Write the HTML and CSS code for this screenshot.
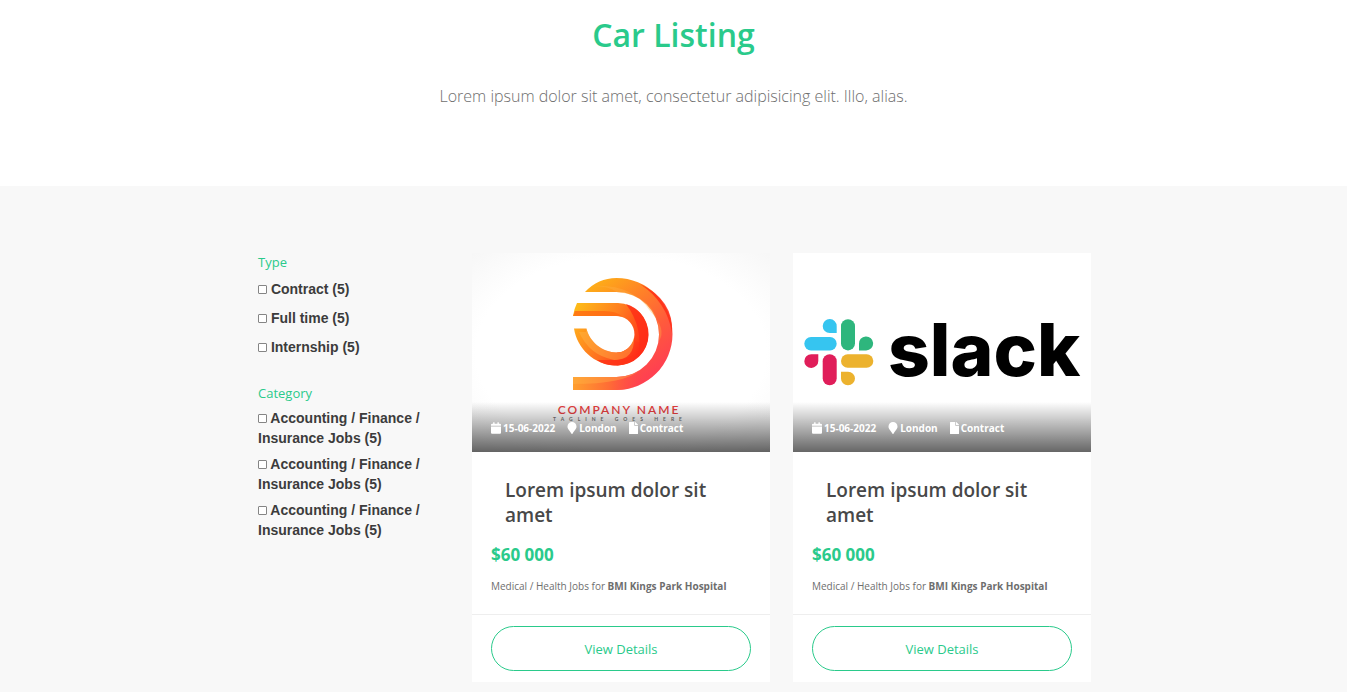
FILE: index.html
```html
<!DOCTYPE html>
<html lang="en">
<head>
<meta charset="utf-8">
<meta name="viewport" content="width=device-width, initial-scale=1">
<title>Car Listing</title>
<link rel="stylesheet" href="styles.css">
</head>
<body>
<svg class="sprite" aria-hidden="true">
  <symbol id="calendar" viewBox="0 0 14 16"><path d="M0 6h14v8.500a1.500 1.500 0 0 1-1.500 1.500h-11A1.500 1.500 0 0 1 0 14.500zM1.500 2H3V.4Q3 0 3.400 0h1.200Q5 0 5 .4V2h4V.4Q9 0 9.400 0h1.200q.4 0 .4.4V2h1.500A1.500 1.500 0 0 1 14 3.500V5H0V3.500A1.500 1.500 0 0 1 1.500 2z"/></symbol>
  <symbol id="marker" viewBox="0 0 12 16"><path d="M5.400 15.700C.8 9.100 0 8.400 0 6a6 6 0 0 1 12 0c0 2.400-.8 3.100-5.400 9.700a.7.7 0 0 1-1.200 0z"/></symbol>
  <symbol id="file" viewBox="0 0 12 16"><path d="M7 4.200V0H.8Q0 0 0 .8v14.400q0 .8.8.8h10.400q.8 0 .8-.8V5H7.800Q7 5 7 4.200zM12 3.800V4H8V0h.2q.3 0 .5.200l3.100 3.100q.2.200.2.500z"/></symbol>
</svg>

<header class="intro">
  <h1 class="intro-title">Car Listing</h1>
  <p class="intro-text">Lorem ipsum dolor sit amet, consectetur adipisicing elit. Illo, alias.</p>
</header>

<main class="listing">
  <div class="container">
    <form class="filters">
      <fieldset class="group types">
        <legend class="group-title">Type</legend>
        <label class="option"><input class="check" type="checkbox"> Contract (5)</label>
        <label class="option"><input class="check" type="checkbox"> Full time (5)</label>
        <label class="option"><input class="check" type="checkbox"> Internship (5)</label>
      </fieldset>
      <fieldset class="group categories">
        <legend class="group-title">Category</legend>
        <label class="option"><input class="check" type="checkbox"> Accounting / Finance / Insurance Jobs (5)</label>
        <label class="option"><input class="check" type="checkbox"> Accounting / Finance / Insurance Jobs (5)</label>
        <label class="option"><input class="check" type="checkbox"> Accounting / Finance / Insurance Jobs (5)</label>
      </fieldset>
    </form>

    <article class="card">
      <div class="media">
        <svg class="picture" viewBox="0 0 298 199" role="img" aria-label="Company logo">
          <defs>
            <radialGradient id="paper" r=".75"><stop offset=".65" stop-color="#fff"/><stop offset="1" stop-color="#f5f5f5"/></radialGradient>
            <linearGradient id="outer" gradientUnits="userSpaceOnUse" x1="112" y1="30" x2="180" y2="120"><stop stop-color="#fdb515"/><stop offset=".35" stop-color="#ff8426"/><stop offset=".7" stop-color="#ff5a3c"/><stop offset="1" stop-color="#ff4150"/></linearGradient>
            <linearGradient id="foot" gradientUnits="userSpaceOnUse" x1="101" y1="0" x2="172" y2="0"><stop stop-color="#ff9f2e"/><stop offset=".5" stop-color="#ff6d35"/><stop offset="1" stop-color="#ff4845" stop-opacity="0"/></linearGradient>
            <linearGradient id="inner" gradientUnits="userSpaceOnUse" x1="103" y1="55" x2="172" y2="92"><stop stop-color="#fdbb18"/><stop offset=".5" stop-color="#ff7f20"/><stop offset="1" stop-color="#ff3018"/></linearGradient>
            <linearGradient id="hook" gradientUnits="userSpaceOnUse" x1="102" y1="76" x2="160" y2="110"><stop stop-color="#ffa91c"/><stop offset=".55" stop-color="#ff6d20"/><stop offset="1" stop-color="#ff2d18"/></linearGradient>
          </defs>
          <rect width="298" height="199" fill="url(#paper)"/>
          <path fill="url(#outer)" d="M113 39Q126 25 144.500 25A56 56 0 0 1 144.500 137H101V124H144.500A42.500 42.500 0 0 0 144.500 39Z"/>
          <path fill="url(#foot)" d="M101 124H144.500Q158 124 168 117L174 129Q160 137 144.500 137H101Z"/>
          <path fill="#ff2d18" opacity=".85" d="M168 31Q202 47 200 80Q195 49 168 31Z"/>
          <path fill="#ffb347" opacity=".35" d="M144.500 39Q138 33 119 33Q160 30 178 58Q195 76 187 88Q190 44 144.500 39Z"/>
          <path fill="#ffb347" opacity=".4" d="M101 124H144.500Q158 124 168 117Q153 131 101 131Z"/>
          <path fill="url(#inner)" d="M105 50H146A31.200 31.200 0 0 1 144.700 112.500V99.500A18.300 18.300 0 0 0 146 63H101Q102 56 105 50Z"/>
          <path fill="url(#hook)" d="M102 75.500H114.500C117 88 130 99.500 145 99.500Q157 99 162 87L173 92Q165 112 144.700 112.500C122 112.500 105 95 102 75.500Z"/>
          <path fill="#ff6512" opacity=".75" d="M103 58H132Q145 58 151 64Q147 63 144 63H101Z"/>
          <path fill="#ff2d18" opacity=".8" d="M154 51C180 59 182 92 166 104Q172 75 154 51Z"/>
          <path fill="#ffb347" opacity=".45" d="M114.500 75.500C117 88 130 99.500 145 99.500Q158 99 162 84Q163 107 142 107Q117 102 107 79H114Z"/>
          <path fill="#ff3218" opacity=".85" d="M125 107H145Q158 106 166 98Q158 113 142 112.500Q132 112 125 107Z"/>
          <text class="brand" x="147" y="161">COMPANY NAME</text>
          <text class="tagline" x="148" y="168">TAGLINE GOES HERE</text>
        </svg>
        <ul class="facts">
          <li class="fact"><svg class="icon"><use href="#calendar"/></svg>15-06-2022</li>
          <li class="fact"><svg class="icon"><use href="#marker"/></svg>London</li>
          <li class="fact"><svg class="icon narrow"><use href="#file"/></svg>Contract</li>
        </ul>
      </div>
      <div class="content">
        <h2 class="card-title">Lorem ipsum dolor sit amet</h2>
        <p class="price">$60 000</p>
        <p class="summary">Medical / Health Jobs for <strong>BMI Kings Park Hospital</strong></p>
      </div>
      <footer class="actions"><a class="details" href="#">View Details</a></footer>
    </article>

    <article class="card">
      <div class="media">
        <svg class="picture" viewBox="0 0 298 199" role="img" aria-label="Slack logo">
          <rect width="298" height="199" fill="#fff"/>
          <g fill="#36c5f0"><path d="M43.700 80V73.200A7 7 0 1 0 36.700 80Z"/><rect x="11.300" y="84" width="32.400" height="13.400" rx="6.700"/></g>
          <g fill="#2eb67d"><rect x="48" y="66.200" width="14" height="31.200" rx="7"/><path d="M66 97.400V91A7.100 7 0 1 1 73.200 97.400Z"/></g>
          <g fill="#e01e5a"><path d="M25.300 101.300V108A7 6.800 0 1 1 18.300 101.300Z"/><rect x="29.700" y="101.300" width="14" height="30.900" rx="7"/></g>
          <g fill="#ecb22e"><rect x="48" y="101.300" width="32.300" height="13.400" rx="6.700"/><path d="M48 118.700H55A7 6.800 0 1 1 48 125.400Z"/></g>
          <text class="wordmark" x="95" y="123">slack</text>
        </svg>
        <ul class="facts">
          <li class="fact"><svg class="icon"><use href="#calendar"/></svg>15-06-2022</li>
          <li class="fact"><svg class="icon"><use href="#marker"/></svg>London</li>
          <li class="fact"><svg class="icon narrow"><use href="#file"/></svg>Contract</li>
        </ul>
      </div>
      <div class="content">
        <h2 class="card-title">Lorem ipsum dolor sit amet</h2>
        <p class="price">$60 000</p>
        <p class="summary">Medical / Health Jobs for <strong>BMI Kings Park Hospital</strong></p>
      </div>
      <footer class="actions"><a class="details" href="#">View Details</a></footer>
    </article>
  </div>
</main>
</body>
</html>
```

FILE: styles.css
```css
* { box-sizing: border-box; }

body {
  margin: 0;
  background: #fff;
  color: #6e6e6e;
  font-family: "Open Sans", "Noto Sans", sans-serif;
  font-size: 14px;
}

h1, h2, p, ul, fieldset { margin: 0; padding: 0; }
fieldset { border: 0; min-width: 0; }
legend { padding: 0; }

.sprite { display: none; }

.intro {
  padding: 11px 24px 76px;
  text-align: center;
}

.intro-title {
  color: #2aca8b;
  font-size: 32px;
  font-weight: 600;
  line-height: 48px;
}

.intro-text {
  margin-top: 23px;
  font-size: 16px;
  font-weight: 300;
  line-height: 28px;
}

.listing {
  min-height: calc(100vh - 186px);
  padding: 67px 24px 10px;
  background: #f8f8f8;
}

.container {
  display: grid;
  grid-template-columns: 193px 1fr 1fr;
  align-items: start;
  gap: 23px;
  max-width: 835px;
  margin: 0 auto;
}

.filters { padding: 0 24px 0 2px; }

.group-title {
  color: #2aca8b;
  font-size: 13px;
  line-height: 18px;
}

.option {
  display: block;
  color: #3c3c3c;
  font-family: "Liberation Sans", Arial, sans-serif;
  font-size: 14px;
  font-weight: 700;
  line-height: 20px;
}

.types .option { margin-top: 8px; }
.types .option + .option { margin-top: 9px; }
.categories { margin-top: 27px; }
.categories .option { margin-top: 6px; }

.check {
  appearance: none;
  width: 9px;
  height: 9px;
  margin: 0;
  border: 1px solid #858585;
  border-radius: 1px;
  background: #fff;
}

.check:checked { background: #2aca8b; }

.card { background: #fff; }

.media { position: relative; }

.picture {
  display: block;
  width: 100%;
  height: auto;
}

.brand {
  fill: #e63e3e;
  font: 600 12px Lato, sans-serif;
  letter-spacing: 2px;
  text-anchor: middle;
}

.tagline {
  fill: #777;
  font: 700 5px Lato, sans-serif;
  letter-spacing: 5px;
  text-anchor: middle;
}

.wordmark {
  fill: #000;
  font: 800 73px Inter, sans-serif;
}

.facts {
  position: absolute;
  inset: auto 0 0;
  display: flex;
  gap: 12px;
  height: 50px;
  padding: 16px 19px 14px;
  background: linear-gradient(rgba(0, 0, 0, 0), rgba(0, 0, 0, .6));
  color: #fff;
  font-size: 10px;
  font-weight: 700;
  line-height: 20px;
  list-style: none;
}

.fact {
  display: flex;
  align-items: center;
  gap: 2px;
  white-space: nowrap;
}

.icon {
  width: 10px;
  height: 12px;
  fill: #fff;
}

.icon.narrow { width: 9px; }

.content { padding: 26px 19px 18px; }

.card-title {
  padding: 0 14px;
  color: #484848;
  font-size: 19px;
  font-weight: 600;
  line-height: 25px;
}

.price {
  margin-top: 15px;
  color: #2aca8b;
  font-size: 17px;
  font-weight: 700;
  line-height: 24px;
}

.summary {
  margin-top: 9px;
  font-size: 10px;
  line-height: 20px;
}

.actions {
  padding: 11px 19px;
  border-top: 1px solid #eee;
}

.details {
  display: block;
  padding-top: 2px;
  border: 1px solid #2aca8b;
  border-radius: 23px;
  color: #2aca8b;
  font-size: 13px;
  line-height: 41px;
  text-align: center;
  text-decoration: none;
}

@media (max-width: 760px) {
  .container { grid-template-columns: 1fr; }
}
```
